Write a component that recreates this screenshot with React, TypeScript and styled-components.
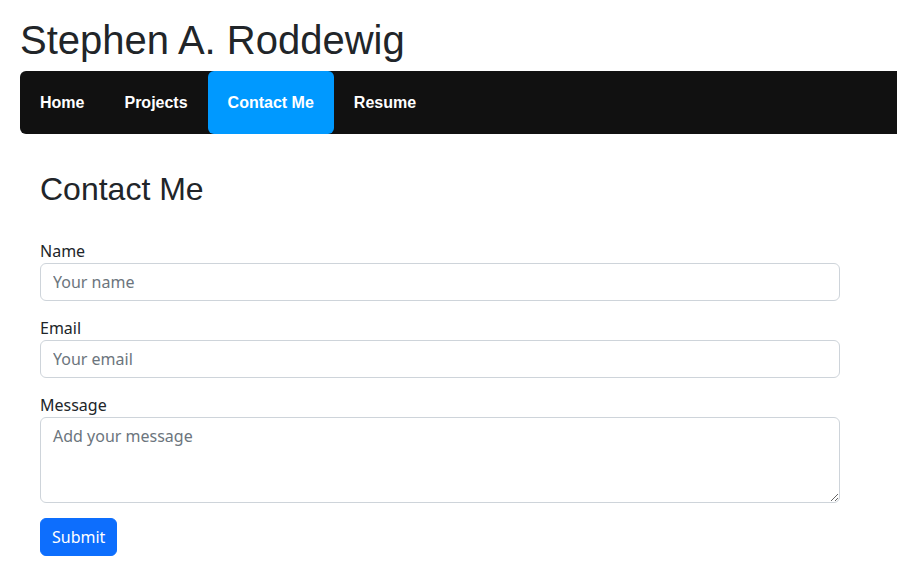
import React from "react";
import styled, { createGlobalStyle } from "styled-components";

const GlobalStyle = createGlobalStyle`
  html, body { margin: 0; padding: 0; background: #fff; }
  body {
    font-family: "Segoe UI", "Noto Sans", "Liberation Sans", sans-serif;
    color: #212529;
    overflow: hidden;
  }
  * { box-sizing: border-box; }
`;

const Page = styled.div`
  padding-left: 20px;
`;

const SiteTitle = styled.h1`
  margin: 16px 0 7px 0;
  font-family: "Liberation Sans", Arial, sans-serif;
  font-weight: 400;
  font-size: 40px;
  line-height: 48px;
  color: #212529;
`;

const NavBar = styled.nav`
  display: flex;
  height: 63px;
  background: #111111;
  border-radius: 6px 0 0 6px;
`;

const NavItem = styled.a<{ $active?: boolean }>`
  display: flex;
  align-items: center;
  padding: 0 20px;
  font-family: "Liberation Sans", Arial, sans-serif;
  font-weight: 700;
  font-size: 16px;
  color: #ffffff;
  text-decoration: none;
  border-radius: 6px;
  background: ${(p) => (p.$active ? "#0099ff" : "transparent")};
`;

const Content = styled.main`
  padding: 36px 0 0 20px;
  width: 820px;
`;

const Heading = styled.h2`
  margin: 0 0 31px 0;
  font-family: "Liberation Sans", Arial, sans-serif;
  font-weight: 400;
  font-size: 32px;
  line-height: 38px;
  color: #212529;
`;

const Form = styled.form`
  display: flex;
  flex-direction: column;
  align-items: flex-start;
`;

const Field = styled.div`
  display: flex;
  flex-direction: column;
  width: 100%;
  margin-bottom: 15px;
`;

const Label = styled.label`
  font-size: 16px;
  line-height: 24px;
  color: #212529;
`;

const inputBase = `
  width: 100%;
  font-family: inherit;
  font-size: 16px;
  line-height: 24px;
  color: #212529;
  background: #fff;
  border: 1px solid #ced4da;
  border-radius: 6px;
  padding: 6px 12px;
  outline: none;
  &::placeholder { color: #6c757d; opacity: 1; }
`;

const TextInput = styled.input`
  ${inputBase}
  height: 38px;
`;

const TextArea = styled.textarea`
  ${inputBase}
  height: 86px;
  resize: vertical;
  display: block;
`;

const SubmitButton = styled.button`
  font-family: inherit;
  font-size: 16px;
  line-height: 24px;
  padding: 6px 11px;
  color: #fff;
  background: #0d6efd;
  border: 1px solid #0d6efd;
  border-radius: 6px;
  cursor: pointer;
`;

export default function App() {
  return (
    <>
      <GlobalStyle />
      <Page>
        <SiteTitle>Stephen A. Roddewig</SiteTitle>
        <NavBar>
          <NavItem href="#">Home</NavItem>
          <NavItem href="#">Projects</NavItem>
          <NavItem href="#" $active>
            Contact Me
          </NavItem>
          <NavItem href="#">Resume</NavItem>
        </NavBar>
        <Content>
          <Heading>Contact Me</Heading>
          <Form onSubmit={(e) => e.preventDefault()}>
            <Field>
              <Label htmlFor="name">Name</Label>
              <TextInput id="name" type="text" placeholder="Your name" />
            </Field>
            <Field>
              <Label htmlFor="email">Email</Label>
              <TextInput id="email" type="email" placeholder="Your email" />
            </Field>
            <Field>
              <Label htmlFor="message">Message</Label>
              <TextArea id="message" placeholder="Add your message" />
            </Field>
            <SubmitButton type="submit">Submit</SubmitButton>
          </Form>
        </Content>
      </Page>
    </>
  );
}
